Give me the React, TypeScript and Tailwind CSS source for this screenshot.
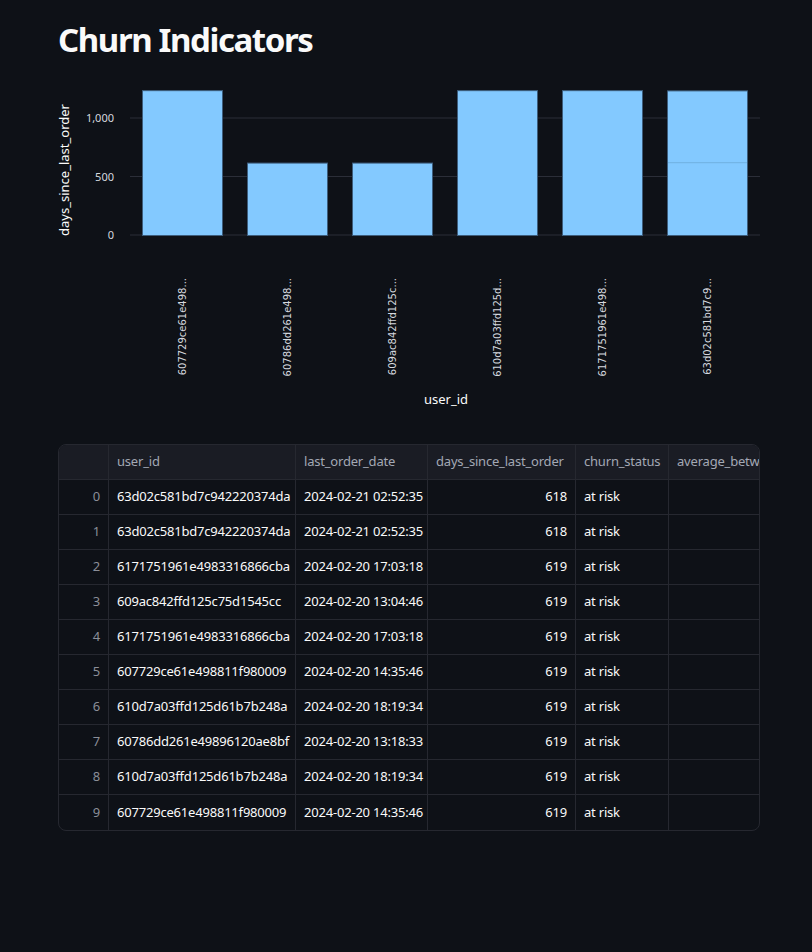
const bars = [
  { id: '607729ce61e498...', value: 1238 },
  { id: '60786dd261e498...', value: 619 },
  { id: '609ac842ffd125c...', value: 619 },
  { id: '610d7a03ffd125d...', value: 1238 },
  { id: '6171751961e498...', value: 1238 },
  { id: '63d02c581bd7c9...', value: 1236, split: 618 },
]

const rows = [
  ['63d02c581bd7c942220374da', '2024-02-21 02:52:35', '618'],
  ['63d02c581bd7c942220374da', '2024-02-21 02:52:35', '618'],
  ['6171751961e4983316866cba', '2024-02-20 17:03:18', '619'],
  ['609ac842ffd125c75d1545cc', '2024-02-20 13:04:46', '619'],
  ['6171751961e4983316866cba', '2024-02-20 17:03:18', '619'],
  ['607729ce61e498811f980009', '2024-02-20 14:35:46', '619'],
  ['610d7a03ffd125d61b7b248a', '2024-02-20 18:19:34', '619'],
  ['60786dd261e49896120ae8bf', '2024-02-20 13:18:33', '619'],
  ['610d7a03ffd125d61b7b248a', '2024-02-20 18:19:34', '619'],
  ['607729ce61e498811f980009', '2024-02-20 14:35:46', '619'],
]

const columns = ['user_id', 'last_order_date', 'days_since_last_order', 'churn_status', 'average_betw']
const gridCols = 'grid grid-cols-[50px_187px_132px_148px_93px_1fr]'

// y scale: 0 -> 155, 1000 -> 38
const yOf = (v: number) => 155 - (v * 117) / 1000

function Chart() {
  return (
    <svg width={704} height={335} overflow="visible" className="block" style={{ fontFamily: '"DejaVu Sans", sans-serif' }}>
      {[0, 500, 1000].map((t) => (
        <g key={t}>
          <line x1={72} x2={702} y1={yOf(t)} y2={yOf(t)} stroke="#2b2e38" strokeWidth={1} />
          <text
            x={56}
            y={yOf(t) + 4}
            textAnchor="end"
            fontSize={11}
            fill="#d5d8df"
            fontFamily='"Noto Sans", sans-serif'
          >
            {t === 1000 ? '1,000' : t}
          </text>
        </g>
      ))}
      <text
        transform="translate(11 90) rotate(-90)"
        textAnchor="middle"
        fontSize={13}
        fill="#fafafa"
        fontFamily='"Noto Sans", sans-serif'
      >
        days_since_last_order
      </text>

      {bars.map((b, i) => {
        const x = 84 + i * 105
        const top = yOf(b.value)
        return (
          <g key={b.id}>
            <rect x={x + 0.5} y={top + 0.5} width={80} height={155 - top} fill="#83c9ff" stroke="#3d5d7c" strokeWidth={1} />
            {b.split && (
              <line x1={x + 1} x2={x + 80} y1={yOf(b.split)} y2={yOf(b.split)} stroke="#6fb0e0" strokeWidth={1} />
            )}
            <text
              transform={`translate(${x + 44} 198) rotate(-90)`}
              textAnchor="end"
              fontSize={10}
              fill="#d5d8df"
            >
              {b.id}
            </text>
          </g>
        )
      })}

      <text x={388} y={324} textAnchor="middle" fontSize={13} fill="#fafafa" fontFamily='"Noto Sans", sans-serif'>
        user_id
      </text>
    </svg>
  )
}

function DataTable() {
  return (
    <div className="mt-[29px] w-[702px] overflow-hidden rounded-lg border border-[#262830] text-[13px] tracking-[-0.2px]">
      <div className={`${gridCols} h-[35px] bg-[#1a1c24] text-[#a3a8b4]`}>
        <div className="border-r border-b border-[#262830]" />
        {columns.map((c, i) => (
          <div
            key={c}
            className={`flex items-center overflow-hidden whitespace-nowrap px-2 border-b border-[#262830] ${
              i < columns.length - 1 ? 'border-r' : ''
            }`}
          >
            {c}
          </div>
        ))}
      </div>
      {rows.map((r, i) => (
        <div key={i} className={`${gridCols} h-[35px] text-[#fafafa]`}>
          <div
            className={`flex items-center justify-end px-2 text-[#8b8e98] border-r border-[#262830] ${
              i < rows.length - 1 ? 'border-b' : ''
            }`}
          >
            {i}
          </div>
          {[r[0], r[1], r[2], 'at risk', ''].map((v, j) => (
            <div
              key={j}
              className={`flex items-center whitespace-nowrap px-2 border-[#262830] ${j === 2 ? 'justify-end' : ''} ${
                j < 4 ? 'border-r' : ''
              } ${i < rows.length - 1 ? 'border-b' : ''}`}
            >
              {v}
            </div>
          ))}
        </div>
      ))}
    </div>
  )
}

export default function App() {
  return (
    <div className="min-h-[952px] bg-[#0e1117] px-[58px] pt-[16px] font-['Noto_Sans',sans-serif] text-[#fafafa]">
      <h1 className="text-[33px] font-bold leading-[48px] tracking-[-1.4px]">Churn Indicators</h1>
      <div className="mt-[16px]">
        <Chart />
      </div>
      <DataTable />
    </div>
  )
}
